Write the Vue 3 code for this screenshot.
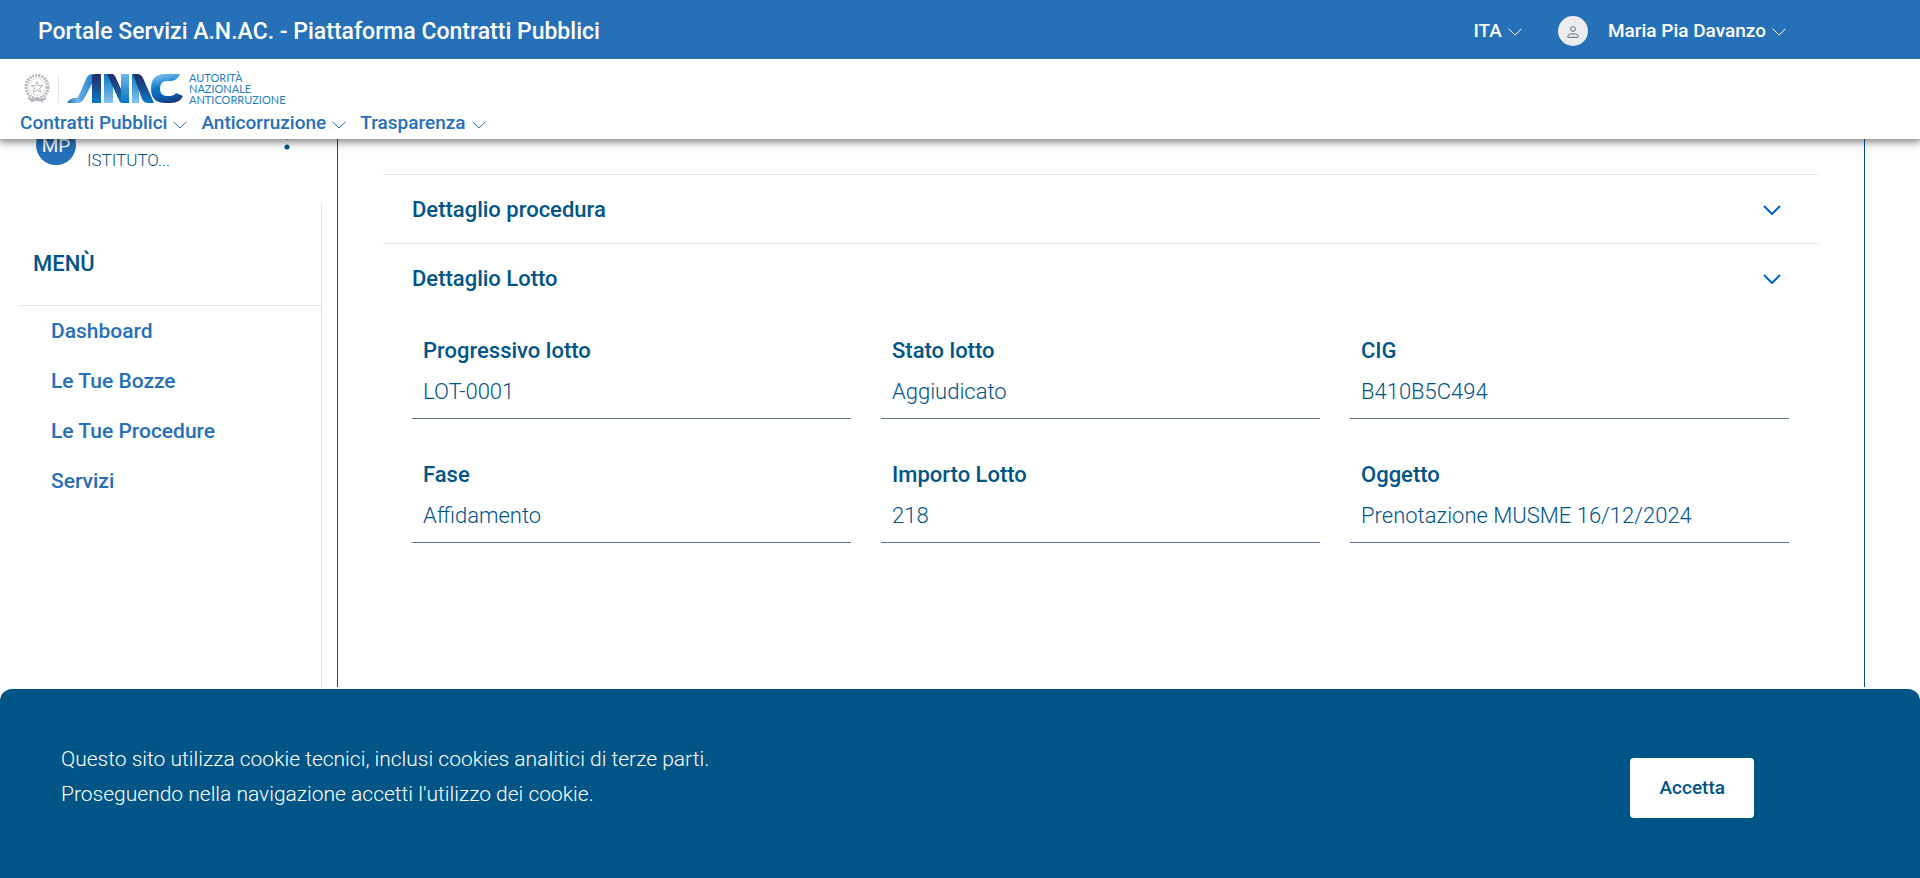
<script setup>
import { ref } from 'vue'

const navItems = ['Contratti Pubblici', 'Anticorruzione', 'Trasparenza']
const menuItems = ['Dashboard', 'Le Tue Bozze', 'Le Tue Procedure', 'Servizi']

const fields = [
  { label: 'Progressivo lotto', value: 'LOT-0001' },
  { label: 'Stato lotto', value: 'Aggiudicato' },
  { label: 'CIG', value: 'B410B5C494' },
  { label: 'Fase', value: 'Affidamento' },
  { label: 'Importo Lotto', value: '218' },
  { label: 'Oggetto', value: 'Prenotazione MUSME 16/12/2024' }
]

const lottoOpen = ref(true)
const cookieVisible = ref(true)
</script>

<template>
  <div class="page">
    <header class="header">
      <div class="topbar">
        <a class="site-title" href="#">Portale Servizi A.N.AC. - Piattaforma Contratti Pubblici</a>
        <div class="topbar-actions">
          <button class="top-btn" type="button">
            ITA
            <svg class="caret" viewBox="0 0 14 8"><path d="M.5 .8 7 7 13.500 .8" /></svg>
          </button>
          <button class="top-btn user" type="button">
            <span class="user-icon">
              <svg viewBox="0 0 12 12" width="12" height="12">
                <circle cx="6" cy="3" r="2.400" />
                <path d="M.8 11.300V10.500C.8 8.800 2.400 7.800 6 7.800s5.200 1 5.200 2.700v.8z" />
              </svg>
            </span>
            Maria Pia Davanzo
            <svg class="caret" viewBox="0 0 14 8"><path d="M.5 .8 7 7 13.500 .8" /></svg>
          </button>
        </div>
      </div>
      <div class="brandbar">
        <a class="brand" href="#" aria-label="ANAC">
          <svg class="emblem" viewBox="0 0 26 29" width="26" height="29">
            <g fill="none" stroke="#b4b8bc">
              <ellipse cx="13" cy="13" rx="11" ry="11.500" stroke-width="3" stroke-dasharray="2 1" />
              <circle cx="13" cy="13" r="8.500" stroke-width="1" stroke="#cdd0d3" stroke-dasharray="2 1" />
              <path d="M4 24c3 3 6 2 9 0 3 2 6 3 9 0M7 27.500q6-3 12 0" stroke-width="2" />
              <path d="M13 7.500l1.400 4H19l-3.500 2.600 1.300 4.200-3.800-2.600-3.800 2.600 1.300-4.200L7 11.500h4.600z" fill="#fff" stroke-width="1" />
            </g>
          </svg>
          <span class="brand-divider"></span>
          <svg class="anac" viewBox="0 0 116 29" width="116" height="29" aria-hidden="true">
            <defs>
              <linearGradient id="tail" x1="0" y1="0" x2="1" y2="0">
                <stop offset="0" stop-color="#0f6fbe" />
                <stop offset=".35" stop-color="#6fb4e8" />
                <stop offset="1" stop-color="#0a76c4" />
              </linearGradient>
              <linearGradient id="navyDown" x1="0" y1="0" x2="0" y2="1">
                <stop offset="0" stop-color="#232d69" />
                <stop offset=".4" stop-color="#1c4687" />
                <stop offset="1" stop-color="#0a7bc7" />
              </linearGradient>
              <linearGradient id="skyDown" x1="0" y1="0" x2="0" y2="1">
                <stop offset="0" stop-color="#0878c3" />
                <stop offset="1" stop-color="#86c4f0" />
              </linearGradient>
              <linearGradient id="skyUp" x1="0" y1="1" x2="0" y2="0">
                <stop offset="0" stop-color="#0878c3" />
                <stop offset="1" stop-color="#6db6ea" />
              </linearGradient>
              <linearGradient id="curve" x1=".6" y1="0" x2=".9" y2="1">
                <stop offset="0" stop-color="#67b3e9" />
                <stop offset=".35" stop-color="#0878c8" />
                <stop offset=".65" stop-color="#0a5fae" />
                <stop offset="1" stop-color="#202b68" />
              </linearGradient>
            </defs>
            <path fill="url(#tail)" d="M0 29q3-5 8-5 3 0 4-3l7-16q2-5 7-5h4L18 23q-3 6-8 6z" />
            <path fill="url(#navyDown)" d="M25 2q1-2 4-2h5v29h-9z" />
            <path fill="url(#skyDown)" d="M37 0h9v29h-9z" />
            <path fill="url(#navyDown)" d="M40 0h5q2 0 3 2l6 13V0h8v29h-6q-3 0-4-3z" />
            <path fill="url(#skyUp)" d="M54 0h8v29h-8z" />
            <path fill="url(#skyDown)" d="M65 0h7v29h-7z" />
            <path fill="url(#navyDown)" d="M66 0h4q4 0 6 4l11 25h-6q-4 0-6-4z" />
            <path fill="url(#curve)" d="M113 0q-3 7-9 7h-4q-7 0-7 7.500t7 7.500h4q3 0 5-3l7 3q-3 7-12 7h-6Q84 29 84 14.500 84 0 98 0z" />
          </svg>
          <span class="brand-text">AUTORITÀ<br>NAZIONALE<br>ANTICORRUZIONE</span>
        </a>
        <nav class="nav">
          <button v-for="item in navItems" :key="item" class="nav-btn" type="button">
            {{ item }}
            <svg class="caret" viewBox="0 0 14 8"><path d="M.5 .8 7 7 13.500 .8" /></svg>
          </button>
        </nav>
      </div>
    </header>

    <div class="layout">
      <aside class="sidebar">
        <div class="profile">
          <span class="avatar">MP</span>
          <span class="profile-name">ISTITUTO...</span>
          <svg class="dots" viewBox="0 0 6 26" width="6" height="26">
            <circle cx="3" cy="3" r="2.500" />
            <circle cx="3" cy="13" r="2.500" />
            <circle cx="3" cy="23" r="2.500" />
          </svg>
        </div>
        <div class="menu">
          <h2 class="menu-title">MENÙ</h2>
          <ul class="menu-list">
            <li v-for="item in menuItems" :key="item"><a href="#">{{ item }}</a></li>
          </ul>
        </div>
      </aside>

      <main class="content">
        <section class="panel">
          <button class="panel-head" type="button">
            Dettaglio procedura
            <svg class="chevron" viewBox="0 0 18 10"><path d="M1 1l8 8 8-8" /></svg>
          </button>
        </section>
        <section class="panel">
          <button class="panel-head" type="button" :aria-expanded="lottoOpen" @click="lottoOpen = !lottoOpen">
            Dettaglio Lotto
            <svg class="chevron" viewBox="0 0 18 10"><path d="M1 1l8 8 8-8" /></svg>
          </button>
          <dl v-if="lottoOpen" class="fields">
            <div v-for="field in fields" :key="field.label" class="field">
              <dt>{{ field.label }}</dt>
              <dd>{{ field.value }}</dd>
            </div>
          </dl>
        </section>
      </main>
    </div>

    <div v-if="cookieVisible" class="cookiebar">
      <p>
        Questo sito utilizza cookie tecnici, inclusi cookies analitici di terze parti.<br>
        Proseguendo nella navigazione accetti l'utilizzo dei cookie.
      </p>
      <button class="accept" type="button" @click="cookieVisible = false">Accetta</button>
    </div>
  </div>
</template>

<style>
body {
  margin: 0;
  background: #fff;
}
</style>

<style scoped>
.page {
  display: flex;
  flex-direction: column;
  height: 100vh;
  overflow: hidden;
  font-family: Roboto, sans-serif;
  color: #005587;
}

button {
  border: none;
  background: none;
  padding: 0;
  font-family: inherit;
  color: inherit;
  cursor: pointer;
}

a {
  text-decoration: none;
  color: inherit;
}

.header {
  position: relative;
  z-index: 2;
  flex: none;
  background: #fff;
  box-shadow: 0 2px 8px 1px rgba(0, 0, 0, 0.5);
}

.topbar {
  display: flex;
  align-items: center;
  justify-content: space-between;
  height: 59px;
  padding: 0 134px 0 38px;
  background: #2670b8;
  color: #fff;
}

.site-title {
  font-size: 23px;
  font-weight: 500;
  line-height: 32px;
  padding-top: 4px;
}

.topbar-actions {
  display: flex;
  align-items: center;
  gap: 36px;
  padding-top: 2px;
}

.top-btn {
  display: flex;
  align-items: center;
  gap: 6px;
  font-size: 19px;
  font-weight: 500;
}

.caret {
  width: 14px;
  height: 8px;
  margin-top: 3px;
  fill: none;
  stroke: currentColor;
  stroke-width: 1;
}

.user-icon {
  display: flex;
  align-items: center;
  justify-content: center;
  width: 30px;
  height: 30px;
  margin-right: 14px;
  border-radius: 50%;
  background: #ebeced;
}

.user-icon svg {
  margin-top: 3px;
  fill: none;
  stroke: #5c6f82;
  stroke-width: 1;
}

.brandbar {
  padding: 15px 20px 0;
}

.brand {
  display: flex;
  width: max-content;
  height: 33px;
  padding-left: 4px;
}

.brand-divider {
  width: 1px;
  height: 29px;
  margin: 0 8px;
  background: #e3e6e8;
}

.brand-text {
  margin-top: -2px;
  padding-left: 6px;
  font-family: Lato, sans-serif;
  font-size: 11px;
  line-height: 11px;
  color: #1f7fc4;
}

.nav {
  display: flex;
  gap: 14px;
}

.nav-btn {
  display: flex;
  align-items: center;
  gap: 6px;
  font-size: 19px;
  font-weight: 500;
  line-height: 32px;
  color: #2670b8;
}

.layout {
  display: flex;
  flex: 1;
  min-height: 0;
  margin-bottom: 2px;
}

.sidebar {
  display: flex;
  flex-direction: column;
  width: 302px;
  padding-left: 20px;
}

.profile {
  display: flex;
  align-items: flex-start;
  height: 64px;
  padding-left: 16px;
}

.avatar {
  display: flex;
  align-items: center;
  justify-content: center;
  width: 40px;
  height: 40px;
  margin-top: -14px;
  border-radius: 50%;
  background: #2670b8;
  color: #fff;
  font-size: 19px;
}

.profile-name {
  flex: 1;
  margin-left: 11px;
  padding-top: 9px;
  font-size: 17px;
  font-weight: 300;
  line-height: 24px;
}

.dots {
  margin: -15px 32px 0 0;
  fill: #005587;
}

.menu {
  flex: 1;
  border-right: 1px solid #e3e4e6;
}

.menu-title {
  margin: 0;
  padding: 45px 13px 25px;
  border-bottom: 1px solid #e3e4e6;
  font-size: 22px;
  font-weight: 500;
  line-height: 32px;
}

.menu-list {
  margin: 0;
  padding: 0 31px;
  list-style: none;
  font-size: 21px;
  font-weight: 500;
  line-height: 50px;
  color: #2670b8;
}

.content {
  flex: 1;
  margin: 0 55px 0 15px;
  padding: 35px 45px 0;
  border: solid #005587;
  border-width: 0 1px;
}

.panel {
  border-top: 1px solid #e3e4e6;
}

.panel-head {
  display: flex;
  align-items: center;
  justify-content: space-between;
  width: 100%;
  padding: 19px 38px 17px 29px;
  font-size: 22px;
  font-weight: 500;
  line-height: 32px;
}

.chevron {
  width: 18px;
  height: 10px;
  fill: none;
  stroke: #0066cc;
  stroke-width: 2;
}

.fields {
  display: grid;
  grid-template-columns: repeat(3, 1fr);
  gap: 24px 30px;
  margin: 0;
  padding: 7px 30px 0 29px;
}

.field {
  padding: 14px 11px 9px;
  border-bottom: 1px solid #5b6f8c;
  font-size: 22px;
  line-height: 35px;
}

.field dt {
  padding-bottom: 6px;
  font-weight: 500;
}

.field dd {
  margin: 0;
  font-weight: 300;
}

.cookiebar {
  display: flex;
  align-items: flex-end;
  justify-content: space-between;
  flex: none;
  padding: 53px 166px 60px 61px;
  border-radius: 12px 12px 0 0;
  background: #005587;
  color: #fff;
}

.cookiebar p {
  margin: 0 0 6px;
  font-size: 21px;
  font-weight: 300;
  line-height: 35px;
}

.accept {
  padding: 18px 29px;
  border-radius: 4px;
  background: #fff;
  color: #005587;
  font-size: 19px;
  font-weight: 500;
  line-height: 24px;
}
</style>
